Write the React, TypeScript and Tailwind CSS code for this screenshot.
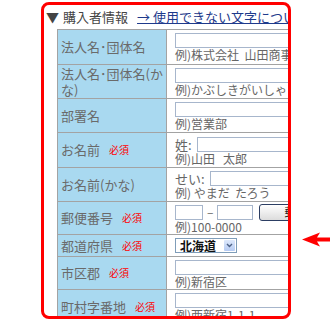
import React from "react";

function Req() {
  return <span className="ml-[9px] text-[10px] leading-[10px] text-[#ff0000]">必須</span>;
}

function Box({ className }: { className: string }) {
  return <div className={"h-[15px] shrink-0 border border-[#a7b6cc] bg-white " + className} />;
}

function Ex({ children }: { children: React.ReactNode }) {
  return <div className="mt-[1px] whitespace-nowrap text-[12px] leading-[12px] text-[#666666]">{children}</div>;
}

function Label({ children }: { children: React.ReactNode }) {
  return (
    <div className="flex w-[109px] shrink-0 items-center border-r border-[#a3a3a3] bg-[#a9d9f0] pl-[3px] text-[13px] leading-[16px] text-[#6a6a6a]">
      {children}
    </div>
  );
}

export default function App() {
  return (
    <div className="relative h-[326px] w-[330px] overflow-hidden bg-white font-['Noto_Sans_CJK_JP','Noto_Sans',sans-serif]">
      <div className="ml-[41px] mt-[2px] h-[317px] w-[250px] overflow-hidden rounded-[8px] border-[3px] border-[#ff0000] bg-white">
        <div className="flex h-[24px] items-center whitespace-nowrap pl-[2px]">
          <span className="text-[13px] text-[#444444]">▼</span>
          <span className="ml-[4px] text-[13px] text-[#444444]">購入者情報</span>
          <span className="ml-[9px] text-[13px] text-[#1e3a8c] underline">→ 使用できない文字について</span>
        </div>
        <div className="ml-[13px] w-[420px] border-l border-t border-[#a3a3a3]">
          <div className="flex h-[35px] border-b border-[#a3a3a3]">
            <Label>法人名･団体名</Label>
            <div className="flex-1 pl-[8px] pt-[3px]">
              <Box className="w-[240px]" />
              <Ex>例)株式会社&nbsp;&nbsp;山田商事</Ex>
            </div>
          </div>
          <div className="flex h-[34px] border-b border-[#a3a3a3]">
            <Label>
              <span>
                法人名･団体名(か
                <br />
                な)
              </span>
            </Label>
            <div className="flex-1 pl-[8px] pt-[3px]">
              <Box className="w-[240px]" />
              <Ex>例)かぶしきがいしゃ&nbsp;&nbsp;やまだしょうじ</Ex>
            </div>
          </div>
          <div className="flex h-[34px] border-b border-[#a3a3a3]">
            <Label>部署名</Label>
            <div className="flex-1 pl-[8px] pt-[3px]">
              <Box className="w-[240px]" />
              <Ex>例)営業部</Ex>
            </div>
          </div>
          <div className="flex h-[35px] border-b border-[#a3a3a3]">
            <Label>
              お名前
              <Req />
            </Label>
            <div className="flex-1 pl-[8px] pt-[3px]">
              <div className="flex h-[16px] items-center">
                <span className="text-[13px] leading-[13px] text-[#666666]">姓:</span>
                <Box className="ml-[5px] w-[200px]" />
              </div>
              <Ex>例)山田&nbsp;&nbsp;&nbsp;太郎</Ex>
            </div>
          </div>
          <div className="flex h-[34px] border-b border-[#a3a3a3]">
            <Label>お名前(かな)</Label>
            <div className="flex-1 pl-[8px] pt-[2px]">
              <div className="flex h-[16px] items-center">
                <span className="text-[13px] leading-[13px] text-[#666666]">せい:</span>
                <Box className="ml-[5px] w-[200px]" />
              </div>
              <Ex>例) やまだ&nbsp;&nbsp;たろう</Ex>
            </div>
          </div>
          <div className="flex h-[33px] border-b border-[#a3a3a3]">
            <Label>
              郵便番号
              <Req />
            </Label>
            <div className="flex-1 pl-[8px] pt-[2px]">
              <div className="flex h-[16px] items-center">
                <Box className="w-[28px]" />
                <span className="mx-[4px] text-[12px] leading-[12px] text-[#666666]">–</span>
                <Box className="w-[36px]" />
                <div className="ml-[6px] flex h-[17px] w-[110px] items-center rounded-[3px] border border-[#2c3e63] bg-gradient-to-b from-white to-[#dcdcdc] pl-[24px] text-[12px] leading-[12px] text-[#222222]">
                  郵便番号検索
                </div>
              </div>
              <Ex>例)100-0000</Ex>
            </div>
          </div>
          <div className="flex h-[22px] border-b border-[#a3a3a3]">
            <Label>
              都道府県
              <Req />
            </Label>
            <div className="flex flex-1 items-center pl-[8px]">
              <div className="flex h-[15px] w-[62px] items-center justify-between border border-[#7f9db9] bg-white pl-[4px] pr-[1px]">
                <span className="text-[12px] font-bold leading-[12px] text-[#111111]">北海道</span>
                <div className="flex h-[11px] w-[11px] items-center justify-center rounded-[1px] bg-gradient-to-b from-[#dde8fb] to-[#b6cbf3]">
                  <svg width="7" height="5" viewBox="0 0 7 5">
                    <path d="M1 1 L3.5 3.5 L6 1" fill="none" stroke="#4d6185" strokeWidth="1.4" />
                  </svg>
                </div>
              </div>
            </div>
          </div>
          <div className="flex h-[33px] border-b border-[#a3a3a3]">
            <Label>
              市区郡
              <Req />
            </Label>
            <div className="flex-1 pl-[8px] pt-[3px]">
              <Box className="w-[240px]" />
              <Ex>例)新宿区</Ex>
            </div>
          </div>
          <div className="flex h-[34px] border-b border-[#a3a3a3]">
            <Label>
              町村字番地
              <Req />
            </Label>
            <div className="flex-1 pl-[8px] pt-[3px]">
              <Box className="w-[240px]" />
              <Ex>例)西新宿1-1-1</Ex>
            </div>
          </div>
        </div>
      </div>
      <svg className="absolute left-[302px] top-[232px]" width="28" height="15" viewBox="0 0 28 15">
        <path d="M0 7.5 L18 0.5 L15 5.5 L28 5.5 L28 9.5 L15 9.5 L18 14.5 Z" fill="#ff0000" />
      </svg>
    </div>
  );
}
